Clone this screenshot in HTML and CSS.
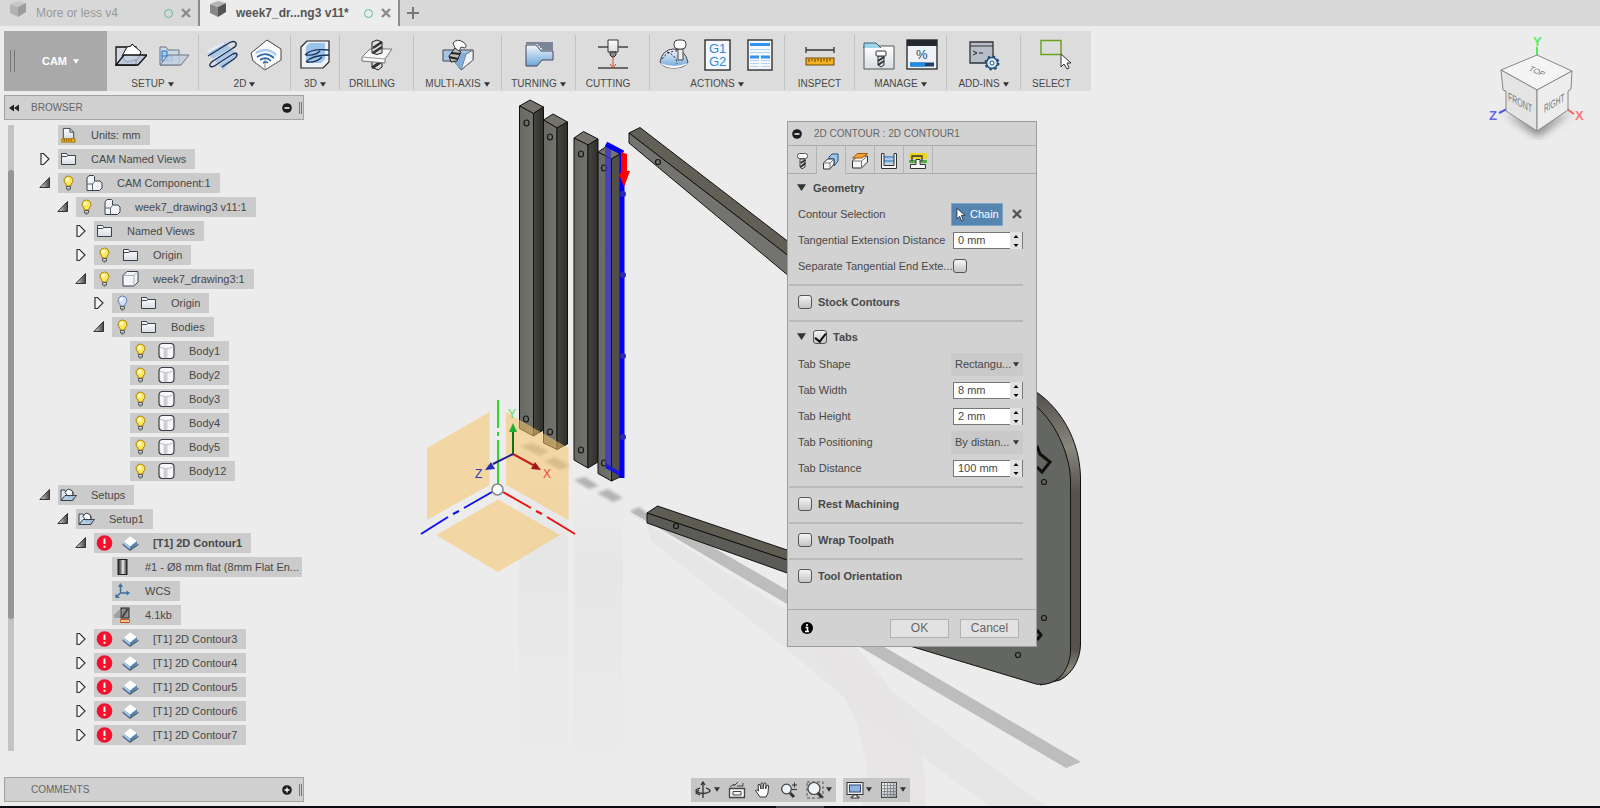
FILE: index.html
```html
<!DOCTYPE html>
<html lang="en">
<head>
<meta charset="utf-8">
<title>week7_drawing3 v11 - CAM</title>
<link rel="stylesheet" href="styles.css">
</head>
<body>
<svg class="sprite" aria-hidden="true">
  <defs>
    <linearGradient id="gBlue" x1="0" y1="0" x2="0" y2="1"><stop offset="0" stop-color="#f2f7fc"/><stop offset="1" stop-color="#6fa5da"/></linearGradient>
    <linearGradient id="gWhite" x1="0" y1="0" x2="0" y2="1"><stop offset="0" stop-color="#fff"/><stop offset="1" stop-color="#d8dde4"/></linearGradient>
    <linearGradient id="gSteel" x1="0" x2="1"><stop offset="0" stop-color="#222"/><stop offset=".3" stop-color="#777"/><stop offset=".55" stop-color="#eee"/><stop offset="1" stop-color="#222"/></linearGradient>
    <linearGradient id="gTri" x1="0" x2="1"><stop offset="0" stop-color="#ddd"/><stop offset="1" stop-color="#444"/></linearGradient>
    <linearGradient id="gGrid" x1="0" y1="0" x2="1" y2="1"><stop offset="0" stop-color="#fff"/><stop offset="1" stop-color="#9aa0ac"/></linearGradient>
  </defs>
  <symbol id="doc" viewBox="0 0 18 18"><path d="M1 4l8 3v10l-8-4z" fill="#888"/><path d="M1 4l8-3 8 2-8 4z" fill="#b4b4b4"/><path d="M9 7l8-4v9l-8 5z" fill="#555"/></symbol>
  <symbol id="x" viewBox="0 0 10 10"><path d="M1 1l8 8M9 1l-8 8" stroke="currentColor" stroke-width="2.400"/></symbol>
  <symbol id="shut" viewBox="0 0 12 14"><path d="M2 1.500h2.500L10 7l-5.500 5.500H2z" fill="#f6f6f6" stroke="#333" stroke-width="1.200"/></symbol>
  <symbol id="open" viewBox="0 0 12 14"><path d="M.8 11.500 10.500 1.500v10z" fill="url(#gTri)" stroke="#333"/></symbol>
  <symbol id="folder" viewBox="0 0 16 16"><path d="M1 13.500v-11h5l1.500 2H15v9z" fill="url(#gWhite)" stroke="#39404e"/><path d="M1 5.500h5l1.500-1" fill="none" stroke="#39404e"/></symbol>
  <symbol id="bulb" viewBox="0 0 12 16"><path d="M6 1a4.500 4.500 0 0 0-2.500 8.200V11h5V9.200A4.500 4.500 0 0 0 6 1z" fill="#ffe75a" stroke="#a88612"/><circle cx="5" cy="4.500" r="1.700" fill="#fffbd0"/><path d="M4 11.500h4v2.500H4zM5 15h2" fill="#ddd" stroke="#555"/></symbol>
  <symbol id="bulboff" viewBox="0 0 12 16"><path d="M6 1a4.500 4.500 0 0 0-2.500 8.200V11h5V9.200A4.500 4.500 0 0 0 6 1z" fill="#cfe0fa" stroke="#6a83b5"/><circle cx="5" cy="4.500" r="1.700" fill="#fff"/><path d="M4 11.500h4v2.500H4zM5 15h2" fill="#ddd" stroke="#555"/></symbol>
  <symbol id="comp" viewBox="0 0 17 16"><path d="M1 3l2-2.500h4.500l1 1V6H14l2 2v5l-2.500 2.500H1z" fill="#f3f5f8" stroke="#39404e"/><path d="M6.500 15V9L8.500 6.500M6.500 9H1" fill="none" stroke="#5b6472"/></symbol>
  <symbol id="body" viewBox="0 0 17 16"><path d="M1 4.500l4-4h11v10.500l-4 4H1z" fill="#f3f5f8" stroke="#39404e"/><path d="M12 15V4.500l4-4M1 4.500h11" fill="none" stroke="#a5abb6"/></symbol>
  <symbol id="cyl" viewBox="0 0 17 16"><rect x="1" y=".5" width="15" height="15" rx="3.500" fill="#f8f8fa" stroke="#39404e" stroke-width="1.200"/><path d="M2 4c3 2 10 2 13 0" fill="none" stroke="#bbb"/><path d="M7.500 6v9" stroke="#d0d0d0" stroke-width="4"/></symbol>
  <symbol id="units" viewBox="0 0 16 17"><path d="M2.500 12V1.500h7l4 4V12" fill="url(#gWhite)" stroke="#39404e"/><path d="M9.500 1.500v4h4" fill="none" stroke="#39404e"/><path d="M1 12.500h14v3.500H1z" fill="#f4b81e" stroke="#a06c00"/><path d="M3.500 13v2M6 13v2M8.500 13v2M11 13v2" stroke="#704a00"/></symbol>
  <symbol id="setup" viewBox="0 0 17 15"><path d="M1 13V2.500h4l1 2h7V13z" fill="#dfe8f2" stroke="#39404e"/><path d="M5 5l3-3.500 4 1.500 1 4-4 3z" fill="#fff" stroke="#39404e"/><path d="M1 13l4-5h11.500l-4 5z" fill="#a8c4e0" fill-opacity=".8" stroke="#39404e"/></symbol>
  <symbol id="err" viewBox="0 0 16 16"><circle cx="8" cy="8" r="7.800" fill="#f5112c"/><path d="M8 3.500v5.500M8 10.800v2" stroke="#fff" stroke-width="2"/></symbol>
  <symbol id="contour" viewBox="0 0 17 16"><path d="M.5 8.500 8 14l8.500-5.500V10L8 16 .5 10z" fill="#4a5f78"/><path d="M1.500 6.500V9L8 14.500V11z" fill="#9dbfe0"/><path d="M15 6v3l-7 5.500V11z" fill="#4a80b4"/><path d="M8 .8 15 6l-7 5.500L1.500 6.500z" fill="#fff" stroke="#b4bcc8" stroke-width=".7"/></symbol>
  <symbol id="mill" viewBox="0 0 10 16"><rect x=".5" y=".5" width="9" height="15" fill="url(#gSteel)" stroke="#222"/></symbol>
  <symbol id="wcs" viewBox="0 0 16 16"><path d="M6 10V2.500M6 10h8M6 10l-4.500 4" stroke="#3f6ea3" stroke-width="1.500" fill="none"/><path d="M3.500 4 6 0l2.500 4zM12 7.500l3.500 2.500-3.500 2.500zM1 10.500V15h4.500z" fill="#3f6ea3"/></symbol>
  <symbol id="size" viewBox="0 0 16 16"><path d="M.5 7v4M2.500 5v6M4.500 3v8" stroke="#777"/><rect x="6.500" y="1" width="8" height="10" fill="#8f8f8f" stroke="#222"/><path d="M8 10l5-8" stroke="#444" stroke-width="2"/><path d="M6 12.500h9v3H6z" fill="#fff" stroke="#c4541c"/><path d="M7 14h7" stroke="#e8802c"/></symbol>
  <symbol id="arrow" viewBox="0 0 8 6"><path d="M0 0h8L4 6z" fill="currentColor"/></symbol>
  <symbol id="minus" viewBox="0 0 10 10"><circle cx="5" cy="5" r="4.800" fill="#1c1c1c"/><path d="M2.500 5h5" stroke="#fff" stroke-width="1.500"/></symbol>
  <symbol id="plus" viewBox="0 0 10 10"><circle cx="5" cy="5" r="4.800" fill="#1c1c1c"/><path d="M2.500 5h5M5 2.500v5" stroke="#fff" stroke-width="1.300"/></symbol>
</svg>

<header class="tabs">
  <div class="tab"><svg class="i18"><use href="#doc"/></svg><span class="tab-name">More or less v4</span><i class="ring"></i><button class="plain" aria-label="Close More or less v4"><svg class="i10"><use href="#x"/></svg></button></div>
  <div class="tab tab-on"><svg class="i18"><use href="#doc"/></svg><span class="tab-name">week7_dr...ng3 v11*</span><i class="ring"></i><button class="plain" aria-label="Close week7_drawing3"><svg class="i10"><use href="#x"/></svg></button></div>
  <button class="plain tab-new" aria-label="New tab"><svg class="i12" viewBox="0 0 12 12"><path d="M6 0v12M0 6h12" stroke="#777" stroke-width="2"/></svg></button>
</header>

<main class="work">
  <svg class="scene" viewBox="0 0 1600 780" preserveAspectRatio="xMinYMin slice" aria-hidden="true">
    <defs>
      <linearGradient id="face" x1="0" x2="1"><stop offset="0" stop-color="#686963"/><stop offset="1" stop-color="#72736d"/></linearGradient>
      <linearGradient id="side" x1="0" x2="1"><stop offset="0" stop-color="#464540"/><stop offset="1" stop-color="#2f2e2a"/></linearGradient>
      <linearGradient id="plateSide" x1="0" y1="0" x2="0" y2="1"><stop offset="0" stop-color="#4d4b45"/><stop offset=".2" stop-color="#8a877e"/><stop offset=".35" stop-color="#55534c"/><stop offset=".88" stop-color="#55534c"/><stop offset=".95" stop-color="#8a877e"/><stop offset="1" stop-color="#44423c"/></linearGradient>
      <linearGradient id="fade" x1="0" y1="0" x2="0" y2="1"><stop offset="0" stop-color="#e6e6e6" stop-opacity=".2"/><stop offset=".25" stop-color="#e6e6e6"/><stop offset="1" stop-color="#e9e9e9" stop-opacity=".3"/></linearGradient>
      <filter id="soft" x="-20%" y="-20%" width="140%" height="140%"><feGaussianBlur stdDeviation="1.500"/></filter>
    </defs>
    <g transform="translate(0 -26)">
      <rect x="519" y="470" width="49" height="320" fill="url(#fade)"/>
      <rect x="574" y="495" width="49" height="300" fill="url(#fade)"/>
      <path d="M647 524 787 610 930 720 1045 806H990L870 720 800 660 650 540z" fill="#e6e5e5" opacity=".8"/>
      <path d="M787 620C840 680 880 740 862 806H925C930 740 900 690 830 620z" fill="#e6e4e4" opacity=".8"/>
      <path d="M630 511 664 519 787 590 1081 762 1066 768 787 604z" fill="#bdbdbd"/>
      <g fill="#b4b4b4" filter="url(#soft)"><path d="M520 446l12-3 17 8-9 5zM544 461l11-4 15 9-10 4zM574 480l11-3 14 9-10 3zM597 493l11-4 15 9-10 4zM630 511l9-4 12 9-5 4z"/></g>
      <g stroke="#111" stroke-width="1" stroke-linejoin="round">
        <path d="M519.500 106 530 100l13.500 7-10 6.500z" fill="#74726b"/><path d="M519.500 106l14 7.500V436l-14-7.500z" fill="url(#face)"/><path d="M533.500 113.500l10-6.500v323l-10 6z" fill="url(#side)"/>
        <path d="M543.500 120l9.500-6 14.500 8-10.500 6z" fill="#74726b"/><path d="M543.500 120l13.500 8v321.500l-13.500-6.500z" fill="url(#face)"/><path d="M557 128l10.500-6v322L557 449.500z" fill="url(#side)"/>
        <path d="M574 138l9.500-6.500L598 139l-10 6z" fill="#74726b"/><path d="M574 138l14 7v323l-14-8z" fill="url(#face)"/><path d="M588 145l10-6v323l-10 6z" fill="url(#side)"/>
        <path d="M598 152l9-6 15 7-10.500 6z" fill="#74726b"/><path d="M598 152l13.500 7v322l-13.500-7.500z" fill="url(#face)"/><path d="M611.500 159l10.500-6v323l-10.500 5z" fill="#514f48"/>
        <path d="M629 133l11-5.500L790 243v14z" fill="#625f57"/><path d="M629 133l161 124v20L629 143z" fill="#73746f"/>
        <path d="M647 513l10.500-7L790 551v10z" fill="#5f5c53"/><path d="M647 513l143 48v13L647 523z" fill="#5b5b57"/>
        <path d="M1030 388C1060 405 1080 440 1080.500 478V645C1080 660 1072 674 1060 680L1040 685 1070 600V480L1037 407z" fill="url(#plateSide)"/>
        <path d="M1030 402C1055 418 1070 455 1070.500 480V652C1069 673 1055 687 1036 684L900 643V402z" fill="#646661"/>
      </g>
      <path d="M1037 446l3 8 10 8-8 10-5-5M1037 630l4 5-4 5" fill="none" stroke="#111" stroke-width="3"/>
      <g fill="none" stroke="#161616" stroke-width="1.200"><ellipse cx="526.500" cy="123" rx="2.500" ry="3"/><ellipse cx="550" cy="137" rx="2.500" ry="3"/><ellipse cx="581" cy="154" rx="2.500" ry="3"/><ellipse cx="604" cy="168" rx="2.500" ry="3"/><ellipse cx="526" cy="419" rx="2.500" ry="3"/><ellipse cx="550" cy="432" rx="2.500" ry="3"/><ellipse cx="581" cy="450" rx="2.500" ry="3"/><ellipse cx="604" cy="463" rx="2.500" ry="3"/><circle cx="658" cy="162" r="2.500"/><circle cx="676" cy="526" r="2.500"/><circle cx="1044" cy="482" r="2.500"/><circle cx="1044" cy="618" r="2.500"/><circle cx="1018" cy="655" r="2.500"/></g>
      <path d="M605 145h6v325l-6-4z" fill="#3a36c8" opacity=".75"/>
      <path d="M606 466l16 9" stroke="#1a18d8" stroke-width="4"/>
      <path d="M606 144l17 9M622 155v323" stroke="#00e" stroke-width="5" fill="none"/>
      <g fill="#2c2cae"><circle cx="623" cy="194" r="3"/><circle cx="623" cy="275" r="3"/><circle cx="623" cy="356" r="3"/><circle cx="623" cy="437" r="3"/></g>
      <path d="M621 152l6 2v17h3l-6 16-5-13 2-1z" fill="#f00"/>
      <g fill="#f8c46a" fill-opacity=".55"><path d="M427 448l62.500-36v73L427 520zM506 412l62.500 36v72L506 485zM498 499.500l62 35.500-62 37-62-37z"/></g>
      <g stroke-width="2"><path d="M498 400v28m0 4v4m0 4v44" stroke="#2ed82e"/><path d="M503 492l28 16m5 3l6 3m5 3l28 17" stroke="#e11"/><path d="M492 492l-28 16m-5 3l-6 3m-5 3l-27 17" stroke="#11e"/></g>
      <circle cx="497.500" cy="489.500" r="5.500" fill="#fff" stroke="#888" stroke-width="1.500"/>
      <g stroke-width="2"><path d="M513 454v-22" stroke="#137013"/><path d="M513 454l22 12" stroke="#c02020"/><path d="M513 454l-20 10" stroke="#201f8a"/></g>
      <path d="M509 432l4-9 4 9z" fill="#1fae2f"/><path d="M541 470l-10-1 4-7z" fill="#a11818"/><path d="M485 470l6-8 4 7z" fill="#2a2ab4"/>
      <g class="axis"><text x="508" y="418" fill="#5ddb55">Y</text><text x="543" y="478" fill="#e44">X</text><text x="475" y="478" fill="#33b">Z</text></g>
    </g>
  </svg>

  <svg class="cube" viewBox="0 0 100 110" role="img" aria-label="View cube">
    <defs><filter id="blur"><feGaussianBlur stdDeviation="4"/></filter></defs>
    <path d="M14 80l34 24 34-26-34 12z" fill="#888" filter="url(#blur)"/>
    <path d="M47 14v8" stroke="#4e5" stroke-width="2"/><path d="M17 76l-8 4" stroke="#55d" stroke-width="2"/><path d="M77 76l7 5" stroke="#e66" stroke-width="2"/>
    <g stroke="#888" stroke-width="1"><path d="M11 37l36-15 35 16-35 19z" fill="#f4f4f4"/><path d="M11 37l36 20v41L16 78V58l-3-1z" fill="#e4e4e4"/><path d="M82 38 47 57v41l31-21V58l3-2z" fill="#ededed"/></g>
    <g class="cube-text"><text transform="matrix(.72 .32 -.5 .6 38 37)">TOP</text><text transform="matrix(.7 .38 0 1.150 18 67)">FRONT</text><text transform="matrix(.66 -.38 0 1.150 54 80)">RIGHT</text></g>
    <g class="cube-axis"><text x="43" y="13" fill="#5e5">Y</text><text x="-1" y="87" fill="#66e">Z</text><text x="85" y="87" fill="#f77">X</text></g>
  </svg>

  <nav class="bar" aria-label="Toolbar">
    <button class="mode"><i class="grip"></i>CAM<svg class="caret"><use href="#arrow"/></svg></button>
    <section class="group pair">
      <div class="tools">
        <svg class="i32" viewBox="0 0 32 32"><path d="M1 8h20v18H1z" fill="#d5d9df" stroke="#111" stroke-width="1.300"/><path d="M7 17 12 8l4-1 1-2 9 8-3 7-12 3z" fill="#fff" stroke="#111"/><path d="M1 26l8-10h23l-9 10z" fill="#b7c4d6" fill-opacity=".8" stroke="#111" stroke-width="1.300"/></svg>
        <svg class="i32" viewBox="0 0 32 32"><path d="M2 26V8h6l2 3h11v15z" fill="#cdd9e7" stroke="#6b7685"/><path d="M4 12h5v5h5v5H4zM4 17h5v5" fill="#a8cdf5" stroke="#2874c6"/><path d="M2 26l8-10h21l-8 10z" fill="#c3d0df" fill-opacity=".8" stroke="#6b7685"/></svg>
      </div><h2>SETUP<svg class="caret"><use href="#arrow"/></svg></h2>
    </section>
    <section class="group pair">
      <div class="tools">
        <svg class="i32" viewBox="0 0 32 32"><path d="M1 14 17 3l14 13-15 15z" fill="#a9c6e6"/><path d="M1 13 17 4M6 21 27 8M10 26l17-11" stroke="#e8f1fa" stroke-width="1.500"/><path d="M1 17 22 4q5-3 7 0 1 3-3 5L6 22q-4 3-3 5 2 2 6-1L26 15q4-2 4 1 0 2-3 4L15 28" fill="none" stroke="#1d2e50" stroke-width="1.400"/></svg>
        <svg class="i32" viewBox="0 0 32 32"><path d="M1 14 17 1l14 9v11L15 31 3 22z" fill="#fbfbfb" stroke="#444"/><path d="M3 22l12 9V19M31 21l-16 10" fill="none" stroke="#888"/><path d="M6 14q11-7 20 2" fill="none" stroke="#a9cbea" stroke-width="2.500"/><path d="M7 18q9-6 17 1M10 21q6-4 11 1M13 24q3-2 5 0" fill="none" stroke="#2c69a8" stroke-width="1.700"/></svg>
      </div><h2>2D<svg class="caret"><use href="#arrow"/></svg></h2>
    </section>
    <section class="group slim">
      <div class="tools"><svg class="i32" viewBox="0 0 32 32"><path d="M2 8l6-6h22v21l-6 6H2z" fill="#eef2f7" stroke="#222" stroke-width="1.200"/><path d="M7 8l3-4h16v16l-4 4H7z" fill="#9cc3ea"/><path d="M6 16q6-7 24-5M7 16q9 1 14-4M7 23q6-7 23-7M8 23q9 1 15-5" fill="none" stroke="#173158" stroke-width="1.300"/></svg></div>
      <h2>3D<svg class="caret"><use href="#arrow"/></svg></h2>
    </section>
    <section class="group">
      <div class="tools"><svg class="i32" viewBox="0 0 32 32"><path d="M11 22h10v6l-4 3-6-3z" fill="#ddd" stroke="#222"/><path d="M11 29l10-7" stroke="#333" stroke-width="3"/><path d="M1 18l8-8h22l-7 10v4L1 22z" fill="#f6f8fa" stroke="#777"/><path d="M1 18l23 2 7-10" fill="none" stroke="#999"/><path d="M11 3l5-2 5 2v11q-5 3-10 0z" fill="#ddd" stroke="#222"/><path d="M12 9l9-6M12 14l9-6" stroke="#333" stroke-width="2.500"/></svg></div>
      <h2 class="bare">DRILLING</h2>
    </section>
    <section class="group wide">
      <div class="tools"><svg class="i32" viewBox="0 0 32 32"><path d="M1 11h30v10L19 31l-7-9H1z" fill="#a6c6e6" stroke="#445"/><path d="M24 15l7-4v10L19 31z" fill="#eef3f8" stroke="#667"/><path d="M13 24l7-10h4l-5 17z" fill="#7faedb"/><path d="M7 17l6-8 6 4-4 9-6 1z" fill="#bbb" stroke="#222"/><path d="M9 14l9 1M7 18l9 2" stroke="#222" stroke-width="2"/><path d="M11 4q4-5 10-1 5 3 2 6l-4-1-2 4-4-3z" fill="#fff" stroke="#444"/></svg></div>
      <h2>MULTI-AXIS<svg class="caret"><use href="#arrow"/></svg></h2>
    </section>
    <section class="group">
      <div class="tools"><svg class="i32" viewBox="0 0 32 32"><path d="M3 6h10l5 6h12v9H19l-5 6H3z" fill="url(#gBlue)" stroke="#445"/><path d="M3 4h27M15 6h15M17 8h13M19 10h11" stroke="#173158" stroke-width="1.200"/></svg></div>
      <h2>TURNING<svg class="caret"><use href="#arrow"/></svg></h2>
    </section>
    <section class="group">
      <div class="tools"><svg class="i32" viewBox="0 0 32 32"><path d="M1 8h30M1 29h30" stroke="#444" stroke-width="1.300"/><path d="M11 1h10v12H11z" fill="url(#gWhite)" stroke="#333"/><path d="M13 13h6v3l-2 2h-2l-2-2z" fill="#888" stroke="#333"/><path d="M16 18v10M13 25l3 4 3-4" fill="none" stroke="#c8502c"/></svg></div>
      <h2 class="bare">CUTTING</h2>
    </section>
    <section class="group triple">
      <div class="tools">
        <svg class="i32" viewBox="0 0 32 32"><path d="M2 23q2-12 13-13 12 0 15 13-3 6-14 6T2 23z" fill="url(#gBlue)" stroke="#444"/><path d="M2 24q14 6 28 0-5 5-14 5T2 24" fill="#fff"/><path d="M4 20q6-9 18-8M9 13q10 4 10 12" fill="none" stroke="#111" stroke-dasharray="2 2"/><path d="M20 10h5v11h-5z" fill="#eee" stroke="#444"/><rect x="16" y="1" width="12" height="9" rx="4" fill="#fff" stroke="#444"/></svg>
        <svg class="i32 g12" viewBox="0 0 32 32"><rect x="4" y="1" width="25" height="30" fill="#f4f7fb" stroke="#222" stroke-width="1.300"/><text x="8" y="14">G1</text><text x="8" y="27">G2</text></svg>
        <svg class="i32" viewBox="0 0 32 32"><rect x="4" y="1" width="24" height="30" fill="#f4f7fb" stroke="#222" stroke-width="1.300"/><path d="M6 5.500h20M6 18h9M17 18h9" stroke="#2f93f2" stroke-width="3"/><path d="M6 10.500h20M6 13.500h20M6 21.500h9M17 21.500h9M6 24.500h9M17 24.500h9M6 27.500h9M17 27.500h9" stroke="#b9d2e8"/></svg>
      </div><h2>ACTIONS<svg class="caret"><use href="#arrow"/></svg></h2>
    </section>
    <section class="group mid">
      <div class="tools"><svg class="i32" viewBox="0 0 32 32"><path d="M2 8v6M30 8v6M2 11h28" stroke="#333" stroke-width="1.300"/><rect x="2" y="19" width="28" height="7" fill="#f2b022" stroke="#6b4a0a"/><path d="M5 20v3M8 20v2M11 20v3M14 20v2M17 20v3M20 20v2M23 20v3M26 20v2" stroke="#5c3e00"/></svg></div>
      <h2>INSPECT</h2>
    </section>
    <section class="group pair">
      <div class="tools">
        <svg class="i32" viewBox="0 0 32 32"><path d="M1 7h30v23H1z" fill="url(#gWhite)" stroke="#555"/><path d="M1 9V4h12l5 5" fill="#9fd4ea" stroke="#3c6272"/><path d="M15 17h6v9l-3 2-3-2z" fill="#ddd" stroke="#333"/><path d="M15 22l6-4M15 26l6-4" stroke="#333" stroke-width="2"/><rect x="13" y="12" width="10" height="5" rx="1" fill="#fff" stroke="#333"/></svg>
        <svg class="i32 pct" viewBox="0 0 32 32"><rect x="1" y="1" width="30" height="29" fill="#eef2f6" stroke="#222" stroke-width="1.300"/><path d="M1 1h30v6H1z" fill="#25282e"/><path d="M4 25.500h24" stroke="#223f66" stroke-width="4"/><path d="M4 25.500h15" stroke="#1e8ae6" stroke-width="4"/><text x="10" y="20">%</text></svg>
      </div><h2>MANAGE<svg class="caret"><use href="#arrow"/></svg></h2>
    </section>
    <section class="group">
      <div class="tools"><svg class="i32" viewBox="0 0 32 32"><path d="M2 3h23v21H2z" fill="#b8bec9" stroke="#333" stroke-width="1.300"/><path d="M2 7h23" stroke="#333"/><path d="M5 12l4 2-4 2M11 14h4" fill="none" stroke="#222"/><g transform="translate(24 24)"><circle r="5.500" fill="#dceaf8" stroke="#24507e" stroke-width="1.500"/><circle r="6.500" fill="none" stroke="#24507e" stroke-width="2" stroke-dasharray="2.500 2.600"/><circle r="2" fill="#fff" stroke="#24507e"/></g></svg></div>
      <h2>ADD-INS<svg class="caret"><use href="#arrow"/></svg></h2>
    </section>
    <section class="group mid">
      <div class="tools"><svg class="i32" viewBox="0 0 32 32"><rect x="1" y="1.500" width="20" height="14" fill="none" stroke="#6aa51e" stroke-width="1.500"/><path d="M21 15v13l3-3 3 5 2-1-2-5h4z" fill="#fff" stroke="#333"/></svg></div>
      <h2 class="bare">SELECT</h2>
    </section>
  </nav>

  <aside class="browser">
    <header class="strip"><svg class="i10" viewBox="0 0 10 10"><path d="M5 1.500v7L0 5zM10 1.500v7L5 5z" fill="#222"/></svg><h2>BROWSER</h2><button class="plain" aria-label="Collapse browser"><svg class="i10"><use href="#minus"/></svg></button><i class="grip small"></i></header>
    <div class="tree-wrap">
      <div class="track"><div class="thumb"></div></div>
      <ul class="tree">
        <li class="d0"><span class="tw"></span><span class="node"><svg><use href="#units"/></svg><b>Units: mm</b></span></li>
        <li class="d0"><svg class="tw"><use href="#shut"/></svg><span class="node"><svg><use href="#folder"/></svg><b>CAM Named Views</b></span></li>
        <li class="d0"><svg class="tw"><use href="#open"/></svg><span class="node"><svg><use href="#bulb"/></svg><svg><use href="#comp"/></svg><b>CAM Component:1</b></span></li>
        <li class="d1"><svg class="tw"><use href="#open"/></svg><span class="node"><svg><use href="#bulb"/></svg><svg><use href="#comp"/></svg><b>week7_drawing3 v11:1</b></span></li>
        <li class="d2"><svg class="tw"><use href="#shut"/></svg><span class="node"><svg><use href="#folder"/></svg><b>Named Views</b></span></li>
        <li class="d2"><svg class="tw"><use href="#shut"/></svg><span class="node"><svg><use href="#bulb"/></svg><svg><use href="#folder"/></svg><b>Origin</b></span></li>
        <li class="d2"><svg class="tw"><use href="#open"/></svg><span class="node"><svg><use href="#bulb"/></svg><svg><use href="#body"/></svg><b>week7_drawing3:1</b></span></li>
        <li class="d3"><svg class="tw"><use href="#shut"/></svg><span class="node"><svg><use href="#bulboff"/></svg><svg><use href="#folder"/></svg><b>Origin</b></span></li>
        <li class="d3"><svg class="tw"><use href="#open"/></svg><span class="node"><svg><use href="#bulb"/></svg><svg><use href="#folder"/></svg><b>Bodies</b></span></li>
        <li class="d4"><span class="tw"></span><span class="node"><svg><use href="#bulb"/></svg><svg><use href="#cyl"/></svg><b>Body1</b></span></li>
        <li class="d4"><span class="tw"></span><span class="node"><svg><use href="#bulb"/></svg><svg><use href="#cyl"/></svg><b>Body2</b></span></li>
        <li class="d4"><span class="tw"></span><span class="node"><svg><use href="#bulb"/></svg><svg><use href="#cyl"/></svg><b>Body3</b></span></li>
        <li class="d4"><span class="tw"></span><span class="node"><svg><use href="#bulb"/></svg><svg><use href="#cyl"/></svg><b>Body4</b></span></li>
        <li class="d4"><span class="tw"></span><span class="node"><svg><use href="#bulb"/></svg><svg><use href="#cyl"/></svg><b>Body5</b></span></li>
        <li class="d4"><span class="tw"></span><span class="node"><svg><use href="#bulb"/></svg><svg><use href="#cyl"/></svg><b>Body12</b></span></li>
        <li class="d0"><svg class="tw"><use href="#open"/></svg><span class="node"><svg><use href="#setup"/></svg><b>Setups</b></span></li>
        <li class="d1"><svg class="tw"><use href="#open"/></svg><span class="node"><svg><use href="#setup"/></svg><b>Setup1</b></span></li>
        <li class="d2"><svg class="tw"><use href="#open"/></svg><span class="node"><svg><use href="#err"/></svg><svg><use href="#contour"/></svg><b class="strong">[T1] 2D Contour1</b></span></li>
        <li class="d3"><span class="tw"></span><span class="node"><svg><use href="#mill"/></svg><b>#1 - Ø8 mm flat (8mm Flat En...</b></span></li>
        <li class="d3"><span class="tw"></span><span class="node"><svg><use href="#wcs"/></svg><b>WCS</b></span></li>
        <li class="d3"><span class="tw"></span><span class="node"><svg><use href="#size"/></svg><b>4.1kb</b></span></li>
        <li class="d2"><svg class="tw"><use href="#shut"/></svg><span class="node"><svg><use href="#err"/></svg><svg><use href="#contour"/></svg><b>[T1] 2D Contour3</b></span></li>
        <li class="d2"><svg class="tw"><use href="#shut"/></svg><span class="node"><svg><use href="#err"/></svg><svg><use href="#contour"/></svg><b>[T1] 2D Contour4</b></span></li>
        <li class="d2"><svg class="tw"><use href="#shut"/></svg><span class="node"><svg><use href="#err"/></svg><svg><use href="#contour"/></svg><b>[T1] 2D Contour5</b></span></li>
        <li class="d2"><svg class="tw"><use href="#shut"/></svg><span class="node"><svg><use href="#err"/></svg><svg><use href="#contour"/></svg><b>[T1] 2D Contour6</b></span></li>
        <li class="d2"><svg class="tw"><use href="#shut"/></svg><span class="node"><svg><use href="#err"/></svg><svg><use href="#contour"/></svg><b>[T1] 2D Contour7</b></span></li>
      </ul>
    </div>
  </aside>

  <footer class="foot">
    <div class="strip"><span class="i10"></span><h2>COMMENTS</h2><button class="plain" aria-label="Expand comments"><svg class="i10"><use href="#plus"/></svg></button><i class="grip small"></i></div>
    <div class="views">
      <div class="viewset">
        <button class="plain" aria-label="Orbit"><svg class="i18" viewBox="0 0 18 18"><path d="M9 1v16M7 4l2-3 2 3" fill="none" stroke="#333" stroke-width="1.300"/><path d="M6 7q-6 2-3 4 6 3 12 0 3-2-3-4M5 9l-3 3 4 2" fill="none" stroke="#333" stroke-width="1.300"/></svg><svg class="caret"><use href="#arrow"/></svg></button>
        <button class="plain" aria-label="Look at"><svg class="i18" viewBox="0 0 18 18"><path d="M1.500 7.500h15v9h-15z" fill="#f4f4f4" stroke="#444" stroke-width="1.300"/><path d="M5 10.500h8v3.500H5zM2 6l4-3v2l4-4M9 5h6V2" fill="none" stroke="#444"/></svg></button>
        <button class="plain" aria-label="Pan"><svg class="i18" viewBox="0 0 18 18"><path d="M6 16 1.500 9.500q1-1.500 3 .5L4 4q1-1.500 2 0l1 4V2.500q1-1.500 2 0V8l1-5.500q1-1.500 2 0L11.500 8 13 4.500q1.500-1 1.500.5L14 12l-2 4z" fill="#fff" stroke="#333"/></svg></button>
        <button class="plain" aria-label="Zoom"><svg class="i18" viewBox="0 0 18 18"><circle cx="6.500" cy="8" r="4.800" fill="#eef4f8" stroke="#444" stroke-width="1.300"/><path d="M10 12l4 4" stroke="#333" stroke-width="3"/><path d="M12 4h5M14.500 1.500v5M12 8.500h5" stroke="#333"/></svg></button>
        <button class="plain" aria-label="Fit"><svg class="i18" viewBox="0 0 18 18"><path d="M1 1h16v16H1z" fill="none" stroke="#555" stroke-dasharray="3 2"/><circle cx="8" cy="7.500" r="6" fill="#eef4f8" stroke="#444" stroke-width="1.200"/><path d="M12 12l4 4.500" stroke="#333" stroke-width="3"/></svg><svg class="caret"><use href="#arrow"/></svg></button>
      </div>
      <div class="viewset">
        <button class="plain" aria-label="Display settings"><svg class="i18" viewBox="0 0 18 18"><rect x="1" y="1.500" width="16" height="12" fill="#eee" stroke="#333"/><rect x="3.500" y="4" width="11" height="7" fill="#8fb4e6" stroke="#334a70"/><path d="M7 14h4v2h2v1H5v-1h2z" fill="#fff" stroke="#333"/></svg><svg class="caret"><use href="#arrow"/></svg></button>
        <button class="plain" aria-label="Grid and snaps"><svg class="i18" viewBox="0 0 18 18"><rect x="1.500" y="1.500" width="15" height="15" fill="url(#gGrid)" stroke="#444"/><path d="M4.500 1v16M7.500 1v16M10.500 1v16M13.500 1v16M1 4.500h16M1 7.500h16M1 10.500h16M1 13.500h16" stroke="#777" stroke-width=".7"/></svg><svg class="caret"><use href="#arrow"/></svg></button>
      </div>
    </div>
  </footer>

  <form class="dialog" aria-label="2D Contour">
    <header class="dlg-title"><svg class="i10"><use href="#minus"/></svg><h2>2D CONTOUR : 2D CONTOUR1</h2></header>
    <div class="dlg-tabs">
      <button type="button" aria-label="Tool"><svg class="i18" viewBox="0 0 18 18"><path d="M7 7h5v8l-3 2-2-2z" fill="#ddd" stroke="#444"/><path d="M7.500 11l5-3M7.500 15l5-4" stroke="#333" stroke-width="2"/><rect x="4.500" y="1.500" width="10" height="5" rx="2" fill="#f6f6f6" stroke="#555"/></svg></button>
      <button type="button" class="on" aria-label="Geometry"><svg class="i18" viewBox="0 0 18 18"><path d="M7 4l3-3h6v7l-4 5V6H7z" fill="#9cc6ee" stroke="#234d80"/><path d="M1.500 10l4-4H12v5l-4 5H1.500z" fill="#f6f6f6" stroke="#333"/><path d="M1.500 10H8v6M8 10l4-4" fill="none" stroke="#777"/></svg></button>
      <button type="button" aria-label="Heights"><svg class="i18" viewBox="0 0 18 18"><path d="M1.500 9l5-5h10v6l-6 6h-9z" fill="#f6f6f6" stroke="#333"/><path d="M1.500 6l5-4.500h10L11 6z" fill="#f2a33a" stroke="#a05a00"/><path d="M1.500 9h9v7M10.500 9l6-5" fill="none" stroke="#777"/></svg></button>
      <button type="button" aria-label="Passes"><svg class="i18" viewBox="0 0 18 18"><path d="M4 3.500h10v8H4z" fill="#a9cdf0"/><path d="M4 5h10M4 9h10" stroke="#2f6fb4"/><path d="M1.500 1.500H4v12h10v-12h2.500v15h-15z" fill="#f6f6f6" stroke="#333"/></svg></button>
      <button type="button" aria-label="Linking"><svg class="i18" viewBox="0 0 18 18"><path d="M0 1h18v6H0z" fill="#ecd81e"/><path d="M0 8h18v3H0z" fill="#55ad48"/><path d="M3 9V4h10v5" fill="none" stroke="#333" stroke-width="1.300"/><path d="M1.500 16.500v-4H7v-5h4v5h5.500v4z" fill="#f6f6f6" stroke="#333"/></svg></button>
    </div>
    <div class="dlg-body">
      <section>
        <h3><svg class="tri"><use href="#arrow"/></svg>Geometry</h3>
        <div class="row"><span class="lab">Contour Selection</span><button type="button" class="chain"><svg class="cur" viewBox="0 0 10 16"><path d="M1 1v12l3-3 2 5 2-1-2-5h4z" fill="#fff" stroke="#234"/></svg>Chain</button><button type="button" class="plain clear" aria-label="Clear selection"><svg class="i10"><use href="#x"/></svg></button></div>
        <div class="row"><label class="lab" for="ted">Tangential Extension Distance</label><span class="spin"><input id="ted" type="text" value="0 mm"><svg viewBox="0 0 12 17"><path d="M6 3l2.500 3h-5zM6 15l2.500-3h-5z"/></svg></span></div>
        <div class="row"><label class="lab" for="sep">Separate Tangential End Exte...</label><input class="offset" id="sep" type="checkbox"></div>
      </section>
      <section><h3 class="solo"><input id="stock" type="checkbox"><label for="stock">Stock Contours</label></h3></section>
      <section>
        <h3 class="lead"><svg class="tri"><use href="#arrow"/></svg><input id="tabs" type="checkbox" checked><label for="tabs">Tabs</label></h3>
        <div class="row"><label class="lab" for="shape">Tab Shape</label><span class="pick"><select id="shape"><option>Rectangu...</option></select><svg class="caret"><use href="#arrow"/></svg></span></div>
        <div class="row"><label class="lab" for="tw">Tab Width</label><span class="spin"><input id="tw" type="text" value="8 mm"><svg viewBox="0 0 12 17"><path d="M6 3l2.500 3h-5zM6 15l2.500-3h-5z"/></svg></span></div>
        <div class="row"><label class="lab" for="th">Tab Height</label><span class="spin"><input id="th" type="text" value="2 mm"><svg viewBox="0 0 12 17"><path d="M6 3l2.500 3h-5zM6 15l2.500-3h-5z"/></svg></span></div>
        <div class="row"><label class="lab" for="pos">Tab Positioning</label><span class="pick"><select id="pos"><option>By distan...</option></select><svg class="caret"><use href="#arrow"/></svg></span></div>
        <div class="row"><label class="lab" for="td">Tab Distance</label><span class="spin"><input id="td" type="text" value="100 mm"><svg viewBox="0 0 12 17"><path d="M6 3l2.500 3h-5zM6 15l2.500-3h-5z"/></svg></span></div>
      </section>
      <section><h3 class="solo"><input id="rest" type="checkbox"><label for="rest">Rest Machining</label></h3></section>
      <section><h3 class="solo"><input id="wrap" type="checkbox"><label for="wrap">Wrap Toolpath</label></h3></section>
      <section><h3 class="solo"><input id="orient" type="checkbox"><label for="orient">Tool Orientation</label></h3></section>
    </div>
    <footer class="dlg-foot"><svg class="i12" viewBox="0 0 12 12"><circle cx="6" cy="6" r="6" fill="#000"/><path d="M6 2v2M4.500 5.500H6.500V9M4 9.500h4" stroke="#fff" stroke-width="1.600" fill="none"/></svg><button type="button" class="btn">OK</button><button type="button" class="btn">Cancel</button></footer>
  </form>
</main>
<div class="edge"><i></i></div>
</body>
</html>
```
FILE: styles.css
```css
* { box-sizing: border-box; }
body {
  margin: 0;
  min-height: 100vh;
  display: flex;
  flex-direction: column;
  background: #ececec;
  color: #484848;
  font: 11px/14px "Liberation Sans", Arial, sans-serif;
}
h2, h3, ul { margin: 0; padding: 0; font-size: inherit; }
h2 { font-weight: 400; font-size: 10px; }
button, input, select { font: inherit; color: inherit; }
svg { display: block; flex: none; }
.sprite { position: absolute; width: 0; height: 0; }
.plain { display: flex; align-items: center; border: 0; padding: 0; background: none; }
.i10 { width: 10px; height: 10px; }
.i12 { width: 12px; height: 12px; }
.i18 { width: 18px; height: 18px; }
.i32 { width: 32px; height: 32px; }
.caret { width: 6px; height: 5px; color: #333; }

/* document tabs */
.tabs { display: flex; height: 26px; background: #d8d8d8; font-size: 12px; }
.tab { display: flex; align-items: center; width: 200px; padding: 0 7px 0 9px; border-right: 2px solid #8c8c8c; color: #999; }
.tab svg { color: #8a8a8a; }
.tab > .i18 { opacity: .45; align-self: flex-start; }
.tab-name { flex: 1; padding-left: 9px; }
.tab-on { background: #ececec; color: #555; font-weight: 700; }
.tab-on > .i18 { opacity: 1; }
.ring { width: 9px; height: 9px; margin-right: 8px; border: 1px solid #5bbda0; border-radius: 50%; }
.tab-new { margin-left: 7px; }

.work { position: relative; flex: 1; display: flex; flex-direction: column; padding: 5px 4px 4px; overflow: hidden; }
.scene { position: absolute; inset: 0; width: 100%; height: 100%; }
.axis { font-size: 12px; }
.cube { position: absolute; top: 7px; right: 10px; width: 100px; height: 110px; overflow: visible; }
.cube-text { font-size: 10px; fill: #777; }
.cube-axis { font-size: 13px; font-weight: 700; }

/* toolbar */
.bar { position: relative; display: flex; align-self: flex-start; height: 60px; background: #dcdcdc; }
.mode { position: relative; display: flex; align-items: center; justify-content: center; gap: 6px; width: 103px; border: 0; padding: 0 0 0 10px; background: #a9a9a9; color: #fff; font-weight: 700; }
.mode .caret { color: #fff; }
.grip { width: 5px; height: 22px; border: solid #777; border-width: 0 1px; }
.mode .grip { position: absolute; left: 6px; }
.grip.small { width: 3px; height: 12px; }
.group { display: flex; flex-direction: column; align-items: center; justify-content: space-between; width: 74px; margin: 4px 0 1px; padding: 4px 0 0; border-right: 1px solid #c2c2c2; }
.group:last-child { border: 0; }
.group h2 { display: flex; align-items: center; gap: 3px; line-height: 12px; white-space: nowrap; }
.group .bare { padding-right: 9px; }
.tools { display: flex; gap: 11px; }
.pair { width: 92px; }
.slim { width: 49px; }
.wide { width: 88px; }
.triple { width: 135px; }
.mid { width: 70px; }
.g12 text { font-size: 13px; fill: #2b8be8; }
.pct text { font-size: 13px; fill: #23446e; }

/* browser tree */
.browser { position: relative; width: 300px; margin-top: 4px; }
.strip { display: flex; align-items: center; width: 300px; height: 25px; padding: 0 1px 0 4px; border: 1px solid #a2a2a2; background: #d0d0d0; color: #666; }
.strip h2 { flex: 1; padding-left: 12px; }
.strip .plain { margin-right: 7px; }
.tree-wrap { display: flex; padding: 5px 0 0 4px; }
.track { flex: none; width: 6px; padding: 45px 0 132px; background: #c3c3c3; }
.thumb { height: 100%; border-radius: 3px; background: #969696; }
.tree { display: flex; flex-direction: column; gap: 4px; list-style: none; padding: 0 0 6px 22px; }
.tree li { display: flex; align-items: center; height: 20px; }
.tw { flex: none; width: 12px; height: 14px; margin: 0 7px 0 3px; }
.tree .d1 { padding-left: 18px; }
.tree .d2 { padding-left: 36px; }
.tree .d3 { padding-left: 54px; }
.tree .d4 { padding-left: 72px; }
.node { display: flex; align-items: center; gap: 9px; height: 20px; max-width: 190px; padding: 0 9px 0 2px; background: #cbcbcb; white-space: nowrap; }
.node svg { width: 17px; height: 16px; }
.node b { padding-left: 5px; font-weight: 400; }
.node .strong { font-weight: 700; }

/* bottom row */
.foot { position: relative; display: grid; grid-template-columns: 1fr auto 1fr; align-items: center; margin-top: auto; }
.views { display: flex; gap: 7px; }
.viewset { display: flex; align-items: center; gap: 8px; height: 24px; padding: 0 4px 0 3px; background: #c6c6c6; }
.viewset .plain { gap: 2px; }
.edge { height: 2px; background: #0a0c12; }
.edge i { display: block; width: 48px; height: 2px; margin: 0 auto; background: #44464c; }

/* operation dialog */
.dialog { position: absolute; top: 95px; left: 787px; width: 250px; border: 1px solid #9c9c9c; background: #d2d2d2; }
.dlg-title { display: flex; align-items: center; gap: 12px; height: 24px; padding-left: 4px; border-bottom: 1px solid #aaa; color: #666; }
.dlg-tabs { display: flex; height: 28px; border-bottom: 1px solid #aaa; }
.dlg-tabs button { display: flex; align-items: center; justify-content: center; width: 29px; height: 27px; border: 0; border-right: 1px solid #b4b4b4; padding: 3px 1px 0 0; background: none; }
.dlg-tabs .on { height: 28px; background: #d2d2d2; }
.dlg-body { padding: 0 13px 15px 1px; }
.dlg-body section { border-bottom: 2px solid #b9b9b9; }
.dlg-body section:has(.row) { padding-bottom: 5px; }
.dlg-body section:last-child { border: 0; }
h3 { display: flex; align-items: center; height: 27px; padding-left: 8px; }
.solo { height: 34px; gap: 6px; padding: 0 0 2px 9px; }
.solo label { padding-bottom: 1px; }
.lead { height: 29px; }
.lead label { padding-left: 6px; }
.tri { width: 9px; height: 7px; margin-right: 7px; color: #333; }
.row { display: flex; align-items: center; height: 26px; padding-left: 9px; }
.lab { flex: 1; white-space: nowrap; }
input[type="checkbox"] { appearance: none; width: 14px; height: 14px; margin: 0; border: 1px solid #555; border-radius: 3px; background: linear-gradient(#f4f4f4, #c4c4c4); }
input[type="checkbox"]:checked::after { content: ""; display: block; width: 5px; height: 9px; margin: 0 auto; border: solid #111; border-width: 0 2px 2px 0; transform: rotate(38deg); }
.row .offset { margin-right: 56px; }
.chain { display: flex; align-items: center; gap: 5px; height: 23px; width: 52px; padding: 0 4px; border: 1px solid #7da5c8; background: #5685b0; color: #fff; }
.cur { width: 9px; height: 15px; }
.clear { width: 20px; padding-left: 9px; color: #555; }
.spin { display: flex; width: 70px; height: 17px; border-right: 1px solid #777; }
.spin input { width: 57px; height: 17px; padding: 0 4px; border: 1px solid #777; border-right: 0; background: #fff; }
.spin svg { width: 12px; height: 17px; background: #e2e2e2; }
.pick { position: relative; display: flex; width: 72px; height: 23px; }
.pick select { appearance: none; width: 100%; border: 0; border-radius: 0; padding: 0 0 0 4px; background: #c9c9c9; }
.pick .caret { position: absolute; right: 4px; top: 9px; pointer-events: none; }
.dlg-foot { display: flex; align-items: center; gap: 11px; height: 37px; padding: 0 17px 0 13px; border-top: 1px solid #aaa; font-size: 12px; }
.dlg-foot svg { margin-right: auto; }
.btn { width: 59px; height: 19px; padding: 0; border: 1px solid #b2b2b2; background: #e2e2e2; color: #666; }
```
